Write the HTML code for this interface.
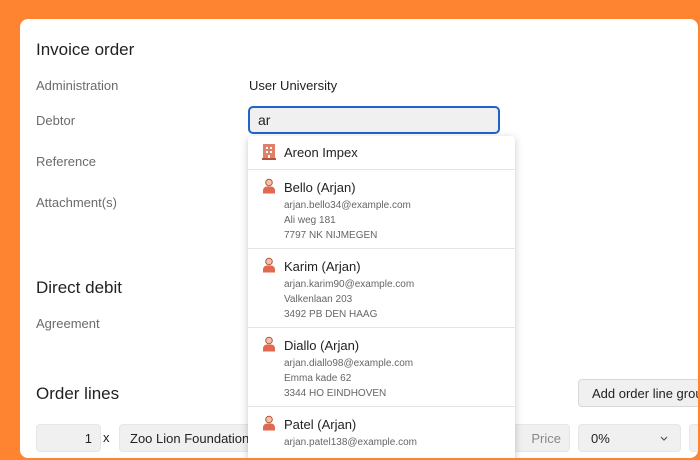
<!DOCTYPE html>
<html><head><style>
*{margin:0;padding:0;box-sizing:border-box}
body{width:700px;height:460px;overflow:hidden;background:#fe8431;font-family:"Liberation Sans",sans-serif;position:relative}
.card{position:absolute;left:20px;top:19px;width:678px;height:439px;background:#fff;border-radius:8px;overflow:hidden}
.a{position:absolute;white-space:nowrap}
.h{font-size:17px;color:#222}
.l{font-size:13px;color:#6b6b6b}
.dd{position:absolute;left:228px;top:117px;width:267px;height:330px;background:#fff;border-radius:4px;box-shadow:0 2px 8px rgba(0,0,0,.22)}
.it{position:absolute;left:0;width:267px;border-top:1px solid #e4e4e4}
.nm{position:absolute;left:36px;font-size:13px;color:#222}
.sm{position:absolute;left:36px;font-size:10px;color:#666;line-height:15px}
.ic{position:absolute;left:14px}
.box{position:absolute;background:#f0f0f0;border-radius:4px;border:1px solid #e6e6e6}
</style></head><body>
<div class="card">
<div class="a h" style="left:16px;top:21px">Invoice order</div>
<div class="a l" style="left:16px;top:59px">Administration</div>
<div class="a" style="left:229px;top:59px;font-size:13px;color:#222">User University</div>
<div class="a l" style="left:16px;top:94px">Debtor</div>
<div class="a" style="left:228px;top:87px;width:252px;height:28px;border:2px solid #1f65c9;border-radius:5px;background:#f0f0f0;font-size:14px;padding:4px 0 0 8px;color:#222">ar</div>
<div class="a l" style="left:16px;top:135px">Reference</div>
<div class="a l" style="left:16px;top:176px">Attachment(s)</div>
<div class="a h" style="left:16px;top:259px">Direct debit</div>
<div class="a l" style="left:16px;top:297px">Agreement</div>
<div class="a h" style="left:16px;top:365px">Order lines</div>
<div class="box" style="left:558px;top:360px;width:130px;height:28px;font-size:13px;color:#222;padding:6px 0 0 13px;white-space:nowrap;overflow:hidden;border-color:#d8d8d8">Add order line group</div>
<div class="box" style="left:16px;top:405px;width:65px;height:28px;font-size:13px;padding:6px 8px 0 0;text-align:right;color:#222">1</div>
<div class="a" style="left:83px;top:411px;font-size:13px;color:#222">x</div>
<div class="box" style="left:99px;top:405px;width:140px;height:28px;font-size:13px;padding:6px 0 0 10px;color:#222;white-space:nowrap">Zoo Lion Foundation</div>
<div class="box" style="left:480px;top:405px;width:70px;height:28px;font-size:13px;padding:6px 8px 0 0;text-align:right;color:#888">Price</div>
<div class="box" style="left:558px;top:405px;width:103px;height:28px;font-size:13px;padding:6px 0 0 12px;color:#222">0%<svg style="position:absolute;right:12px;top:11px" width="8" height="5" viewBox="0 0 8 5"><path d="M1 1l3 3 3-3" fill="none" stroke="#555" stroke-width="1.2"/></svg></div>
<div class="box" style="left:669px;top:405px;width:30px;height:28px"></div>
<div class="dd">
<div class="it" style="top:0;height:33px;border-top:none">
<svg class="ic" style="top:8px" width="14" height="16" viewBox="0 0 14 16"><rect x="1" y="0" width="12" height="16" fill="#e0806a"/><rect x="0" y="14" width="14" height="2" fill="#b5523d"/><g fill="#fff"><rect x="4" y="3" width="2" height="2"/><rect x="8" y="3" width="2" height="2"/><rect x="4" y="7" width="2" height="2"/><rect x="8" y="7" width="2" height="2"/><rect x="6" y="11" width="2" height="3"/></g></svg>
<div class="nm" style="top:9px">Areon Impex</div></div>
<div class="it" style="top:33px;height:79px">
<svg class="ic" style="top:8px" width="14" height="16" viewBox="0 0 14 16"><circle cx="7" cy="4.5" r="3.3" fill="#f5c3a8" stroke="#b5523d" stroke-width="1"/><path d="M1 15.5v-3a4 4 0 0 1 4-4h4a4 4 0 0 1 4 4v3z" fill="#e0694f"/></svg>
<div class="nm" style="top:10px">Bello (Arjan)</div>
<div class="sm" style="top:28px">arjan.bello34@example.com<br>Ali weg 181<br>7797 NK NIJMEGEN</div></div>
<div class="it" style="top:112px;height:79px">
<svg class="ic" style="top:8px" width="14" height="16" viewBox="0 0 14 16"><circle cx="7" cy="4.5" r="3.3" fill="#f5c3a8" stroke="#b5523d" stroke-width="1"/><path d="M1 15.5v-3a4 4 0 0 1 4-4h4a4 4 0 0 1 4 4v3z" fill="#e0694f"/></svg>
<div class="nm" style="top:10px">Karim (Arjan)</div>
<div class="sm" style="top:28px">arjan.karim90@example.com<br>Valkenlaan 203<br>3492 PB DEN HAAG</div></div>
<div class="it" style="top:191px;height:79px">
<svg class="ic" style="top:8px" width="14" height="16" viewBox="0 0 14 16"><circle cx="7" cy="4.5" r="3.3" fill="#f5c3a8" stroke="#b5523d" stroke-width="1"/><path d="M1 15.5v-3a4 4 0 0 1 4-4h4a4 4 0 0 1 4 4v3z" fill="#e0694f"/></svg>
<div class="nm" style="top:10px">Diallo (Arjan)</div>
<div class="sm" style="top:28px">arjan.diallo98@example.com<br>Emma kade 62<br>3344 HO EINDHOVEN</div></div>
<div class="it" style="top:270px;height:60px">
<svg class="ic" style="top:8px" width="14" height="16" viewBox="0 0 14 16"><circle cx="7" cy="4.5" r="3.3" fill="#f5c3a8" stroke="#b5523d" stroke-width="1"/><path d="M1 15.5v-3a4 4 0 0 1 4-4h4a4 4 0 0 1 4 4v3z" fill="#e0694f"/></svg>
<div class="nm" style="top:10px">Patel (Arjan)</div>
<div class="sm" style="top:28px">arjan.patel138@example.com</div></div>
</div>
</div>
</body></html>
